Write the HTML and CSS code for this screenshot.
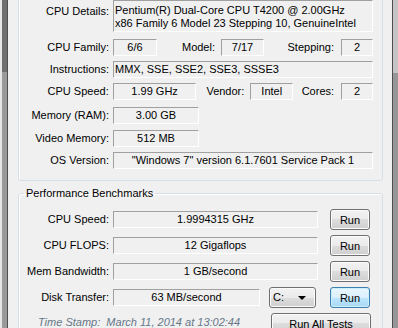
FILE: index.html
```html
<!DOCTYPE html>
<html lang="en">
  <head>
    <meta charset="UTF-8" />
    <meta name="viewport" content="width=device-width, initial-scale=1.0" />
    <title>System Info</title>
    <link rel="stylesheet" href="styles.css">
  </head>
  <body>
    <div class="frame">
      <div class="edge edge_left"><span class="edge_light"></span><span class="edge_bar"></span><span class="edge_line"></span></div>

      <main class="main">
        <fieldset class="group group_info">
          <div class="row row_top gap7">
            <span class="lbl lbl_top">CPU Details:</span>
            <div class="val val_multi grow">Pentium(R) Dual-Core CPU T4200 @ 2.00GHz<br>x86 Family 6 Model 23 Stepping 10, GenuineIntel</div>
          </div>

          <div class="row gap5">
            <span class="lbl">CPU Family:</span>
            <div class="val center family_val">6/6</div>
            <span class="lbl model_lbl">Model:</span>
            <div class="val center small_val">7/17</div>
            <span class="lbl stepping_lbl">Stepping:</span>
            <div class="val center tiny_val">2</div>
          </div>

          <div class="row gap5">
            <span class="lbl">Instructions:</span>
            <div class="val grow">MMX, SSE, SSE2, SSE3, SSSE3</div>
          </div>

          <div class="row gap7">
            <span class="lbl">CPU Speed:</span>
            <div class="val center speed_val">1.99 GHz</div>
            <span class="lbl vendor_lbl">Vendor:</span>
            <div class="val center small_val">Intel</div>
            <span class="lbl cores_lbl">Cores:</span>
            <div class="val center tiny_val">2</div>
          </div>

          <div class="row gap6">
            <span class="lbl">Memory (RAM):</span>
            <div class="val center mem_val">3.00 GB</div>
          </div>

          <div class="row gap5">
            <span class="lbl">Video Memory:</span>
            <div class="val center mem_val">512 MB</div>
          </div>

          <div class="row">
            <span class="lbl">OS Version:</span>
            <div class="val center grow">"Windows 7" version 6.1.7601 Service Pack 1</div>
          </div>
        </fieldset>

        <fieldset class="group group_bench">
          <legend>Performance Benchmarks</legend>

          <div class="bench">
            <span class="lbl">CPU Speed:</span>
            <div class="val center bench_val">1.9994315 GHz</div>
            <button class="btn run">Run</button>
          </div>

          <div class="bench">
            <span class="lbl">CPU FLOPS:</span>
            <div class="val center bench_val">12 Gigaflops</div>
            <button class="btn run">Run</button>
          </div>

          <div class="bench">
            <span class="lbl">Mem Bandwidth:</span>
            <div class="val center bench_val">1 GB/second</div>
            <button class="btn run">Run</button>
          </div>

          <div class="bench">
            <span class="lbl">Disk Transfer:</span>
            <div class="val center disk_val">63 MB/second</div>
            <div class="btn drive">C:<span class="arrow"></span></div>
            <button class="btn run valgt">Run</button>
          </div>

          <div class="stamp_row">
            <span class="stamp">Time Stamp:&nbsp; March 11, 2014 at 13:02:44</span>
            <button class="btn run_all">Run All Tests</button>
          </div>
        </fieldset>
      </main>

      <div class="edge edge_right"><span class="edge_line"></span><span class="edge_bar"></span></div>
    </div>
  </body>
</html>
```

FILE: styles.css
```css
* {
  box-sizing: border-box;
  margin: 0;
  padding: 0;
}

body {
  background-color: #f0f0f0;
  font-family: "Liberation Sans", Arial, sans-serif;
  font-size: 11px;
  color: #000;
  overflow: hidden;
  height: 328px;
}

.frame {
  display: flex;
  height: 328px;
}

/* window edges */
.edge {
  display: flex;
  height: 100%;
}

.edge_left {
  width: 8px;
}

.edge_left .edge_light {
  width: 2px;
  background-color: #e6e6e6;
}

.edge_left .edge_bar {
  width: 5px;
  background: linear-gradient(#6f6f6f 0, #6f6f6f 72px, #9a9a9a 72px);
}

.edge_line {
  width: 1px;
  background-color: #4f4f4f;
}

.edge_right {
  width: 6px;
}

.edge_right .edge_bar {
  width: 5px;
  background: linear-gradient(#c4c4c4 0, #c4c4c4 73px, #979797 73px);
}

.main {
  width: 384px;
  padding-left: 10px;
  padding-right: 9px;
}

/* group boxes */
.group {
  border: 1px solid #d5dfe5;
  border-radius: 3px;
  box-shadow: inset 1px 1px 0 #fff;
  min-width: 0;
}

.group_info {
  margin-top: -20px;
  padding: 19px 9px 11px 0;
}

.group_bench {
  margin-top: 6px;
  padding: 9px 0 20px 0;
}

.group legend {
  margin-left: 5px;
  padding: 0 2px;
  line-height: 13px;
}

/* rows */
.row {
  display: flex;
  align-items: center;
}

.row_top {
  align-items: flex-start;
}

.gap5 {
  margin-bottom: 5px;
}

.gap6 {
  margin-bottom: 6px;
}

.gap7 {
  margin-bottom: 7px;
}

.lbl {
  width: 90px;
  margin-right: 4px;
  text-align: right;
  white-space: nowrap;
  line-height: 15px;
}

.lbl_top {
  padding-top: 4px;
}

.model_lbl {
  width: 58px;
  margin-right: 6px;
}

.stepping_lbl {
  width: 70px;
  margin-right: 7px;
}

.vendor_lbl {
  width: 48px;
  margin-right: 6px;
}

.cores_lbl {
  width: 41px;
  margin-right: 7px;
}

.val {
  height: 17px;
  line-height: 15px;
  padding: 0 1px;
  border: 1px solid;
  border-color: #a0a0a0 #fff #fff #a0a0a0;
  white-space: nowrap;
  overflow: hidden;
}

.val_multi {
  height: 32px;
  line-height: 13px;
  padding-top: 3px;
}

.family_val {
  width: 44px;
}

.small_val {
  width: 43px;
}

.tiny_val {
  width: 32px;
}

.speed_val {
  width: 84px;
}

.mem_val {
  width: 86px;
}

.center {
  text-align: center;
}

.grow {
  flex: 1;
}

/* benchmarks */
.bench {
  display: flex;
  align-items: center;
  height: 21px;
  margin-bottom: 5px;
}

.bench_val {
  width: 205px;
}

.disk_val {
  width: 147px;
}

.btn {
  font-family: "Liberation Sans", Arial, sans-serif;
  font-size: 11px;
  color: #000;
  height: 21px;
  border: 1px solid #707070;
  border-radius: 3px;
  background: linear-gradient(#f2f2f2 0%, #ebebeb 50%, #dddddd 50%, #cfcfcf 100%);
  box-shadow: inset 0 0 0 1px #fcfcfc;
}

.run {
  width: 40px;
  margin-left: 12px;
}

.valgt {
  border-color: #3c7fb1;
  background: linear-gradient(#eaf6fd 0%, #d9f0fc 50%, #bee6fd 50%, #a7d9f5 100%);
  box-shadow: inset 0 0 0 1px #cdeefc;
}

.drive {
  display: flex;
  align-items: center;
  justify-content: space-between;
  width: 47px;
  margin-left: 9px;
  padding: 0 9px 0 3px;
  line-height: 19px;
}

.drive + .run {
  margin-left: 14px;
}

.arrow {
  width: 0;
  height: 0;
  border-left: 4px solid transparent;
  border-right: 4px solid transparent;
  border-top: 4px solid #000;
}

.stamp_row {
  display: flex;
  align-items: flex-start;
  margin-top: 3px;
}

.stamp {
  flex: 1;
  padding-left: 19px;
  padding-top: 2px;
  line-height: 15px;
  font-style: italic;
  color: #667788;
}

.run_all {
  width: 100px;
  margin-right: 11px;
}
```
